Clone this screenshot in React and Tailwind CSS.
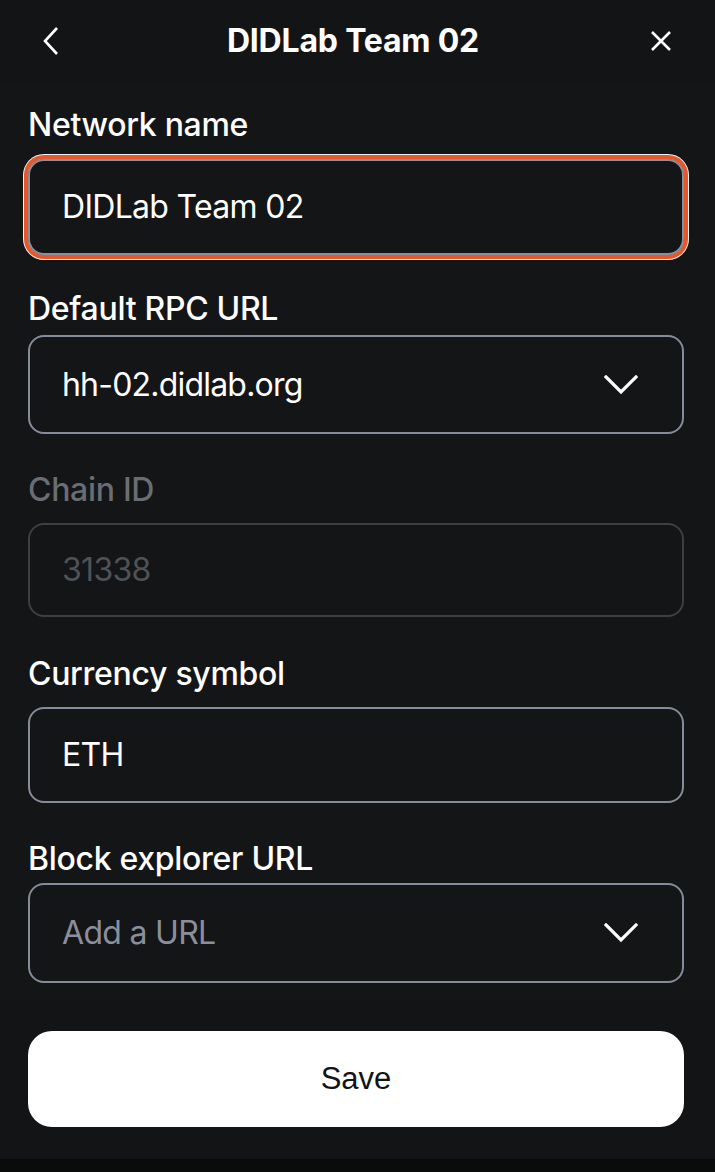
import React from "react";

const font = { fontFamily: "Inter, 'Noto Sans', sans-serif" };

function Chevron() {
  return (
    <svg width="34" height="20" viewBox="0 0 34 20" fill="none" className="shrink-0">
      <path d="M2 2 L17 17 L32 2" stroke="#ffffff" strokeWidth="3.2" strokeLinecap="square" strokeLinejoin="miter" />
    </svg>
  );
}

function Label({ children, disabled }) {
  return (
    <div className={`text-[32px] leading-[48px] font-medium tracking-[-0.3px] ${disabled ? "text-[#6a6d73]" : "text-white"}`}>
      {children}
    </div>
  );
}

export default function App() {
  return (
    <div className="w-[715px] h-[1172px] bg-[#0a0b0b] flex flex-col" style={font}>
      <div className="h-[1159px] bg-[#131416] flex flex-col">
        {/* header */}
        <div className="h-[82px] flex items-center justify-between pl-[41px] pr-[42px] shrink-0">
          <svg width="20" height="30" viewBox="0 0 20 30" fill="none">
            <path d="M16 2 L4 15 L16 28" stroke="#fff" strokeWidth="2.6" />
          </svg>
          <div className="text-[32px] leading-[48px] font-bold text-white tracking-[-0.2px] mr-[4px]">DIDLab Team 02</div>
          <svg width="24" height="24" viewBox="0 0 24 24" fill="none">
            <path d="M3 3 L21 21 M21 3 L3 21" stroke="#fff" strokeWidth="2.6" />
          </svg>
        </div>

        {/* form */}
        <div className="h-[917px] bg-[#141517] pl-[28px] pr-[31px] pt-[19px] flex flex-col shrink-0">
          <Label>Network name</Label>
          <div className="mt-[10px] h-[96px] rounded-[16px] border-2 border-[#8a8f9a] shadow-[0_0_0_4px_#e5582c,0_0_0_5px_#f3f3f3] flex items-center px-[32px]">
            <span className="text-[32px] text-white tracking-[-0.7px]">DIDLab Team 02</span>
          </div>

          <div className="mt-[30px]">
            <Label>Default RPC URL</Label>
          </div>
          <div className="mt-[2px] h-[99px] rounded-[16px] border-2 border-[#858b9a] flex items-center justify-between pl-[32px] pr-[44px]">
            <span className="text-[32px] text-white tracking-[-0.8px]">hh-02.didlab.org</span>
            <Chevron />
          </div>

          <div className="mt-[32px]">
            <Label disabled>Chain ID</Label>
          </div>
          <div className="mt-[9px] h-[94px] rounded-[16px] border-2 border-[#3c3f44] bg-[#141517] flex items-center px-[32px]">
            <span className="text-[32px] text-[#4f5257] tracking-[-0.7px]">31338</span>
          </div>

          <div className="mt-[33px]">
            <Label>Currency symbol</Label>
          </div>
          <div className="mt-[9px] h-[96px] rounded-[16px] border-2 border-[#858b9a] flex items-center px-[32px]">
            <span className="text-[32px] text-white tracking-[-0.7px]">ETH</span>
          </div>

          <div className="mt-[32px]">
            <Label>Block explorer URL</Label>
          </div>
          <div className="h-[100px] rounded-[16px] border-2 border-[#858b9a] flex items-center justify-between pl-[32px] pr-[44px]">
            <span className="text-[32px] text-[#8a8f9b] tracking-[-0.7px]">Add a URL</span>
            <Chevron />
          </div>
        </div>

        {/* footer */}
        <div className="flex-1 pl-[28px] pr-[31px] pt-[32px]">
          <button
            className="w-full h-[96px] rounded-[24px] bg-white text-[#121314] text-[31px] flex items-center justify-center"
            style={{ fontFamily: "'Liberation Sans', Arial, sans-serif" }}
          >
            Save
          </button>
        </div>
      </div>
    </div>
  );
}
